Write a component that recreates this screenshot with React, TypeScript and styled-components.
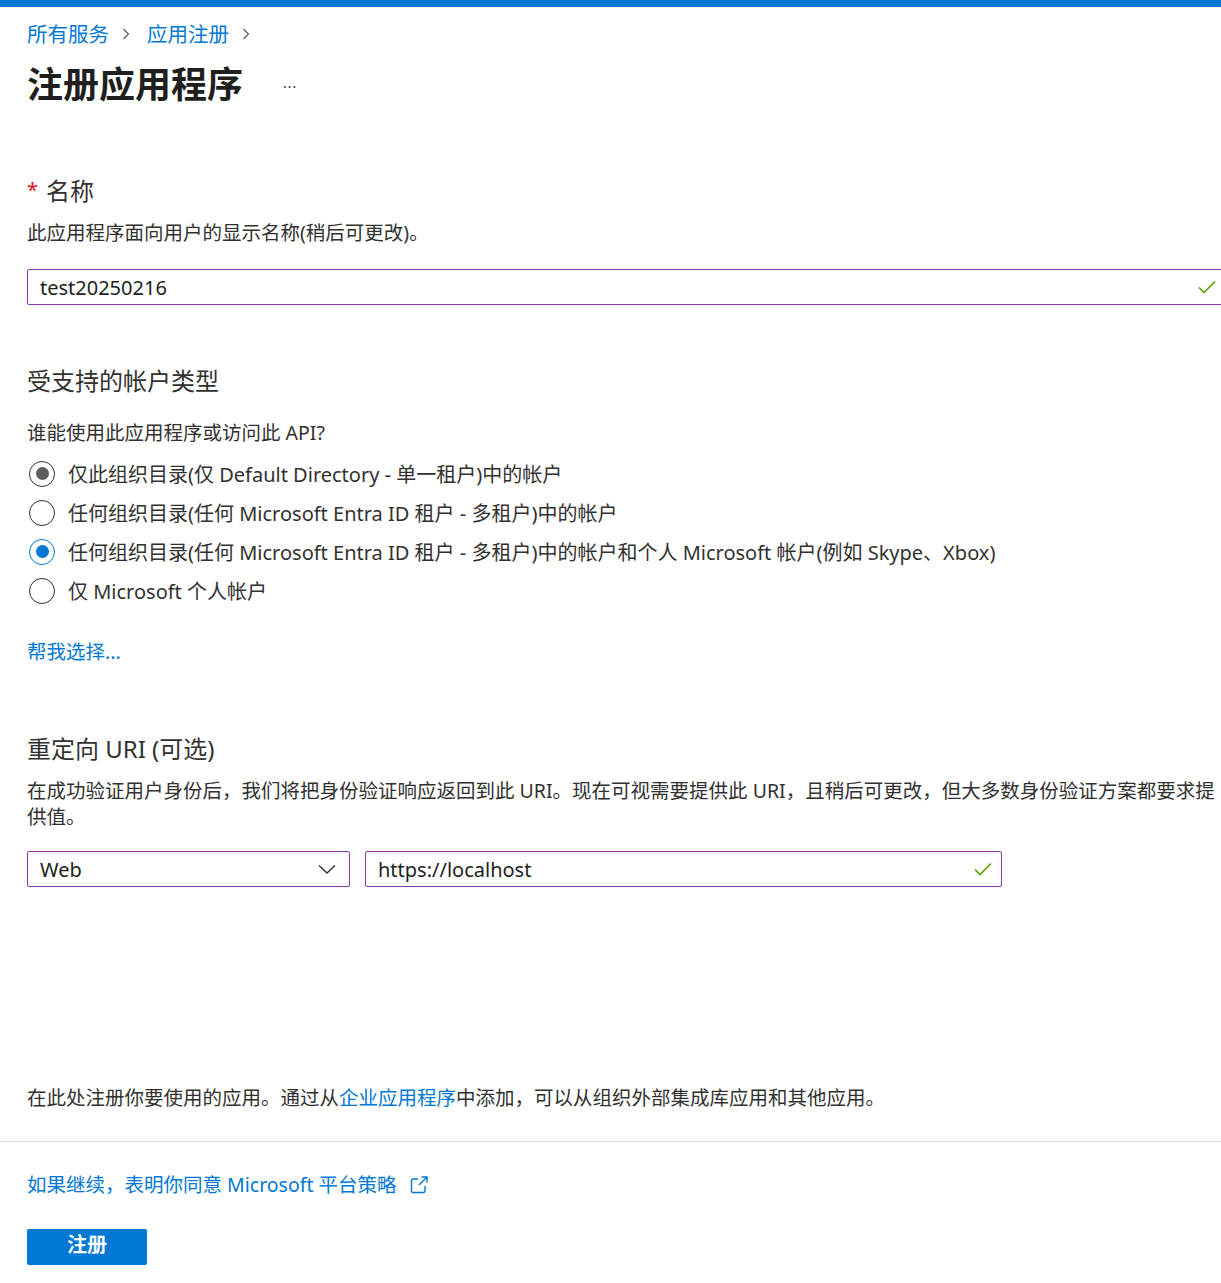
import React from "react";
import styled, { createGlobalStyle } from "styled-components";

const Global = createGlobalStyle`
  html, body { margin: 0; padding: 0; background: #fff; overflow-x: hidden; }
  body {
    font-family: "Noto Sans", "Noto Sans CJK SC", sans-serif;
    color: #323130;
  }
  * { box-sizing: border-box; }
`;

const TopBar = styled.div`
  height: 7px;
  background: #0078d4;
`;

const Page = styled.div`
  padding: 0 0 0 27px;
  width: 1226px;
`;

const Breadcrumb = styled.nav`
  margin-top: 13px;
  height: 28px;
  display: flex;
  align-items: center;
  gap: 11px;
  font-size: 20.5px;
  line-height: 28px;
`;

const Crumb = styled.a`
  color: #0078d4;
  text-decoration: none;
`;

const Chevron = styled.svg`
  width: 12px;
  height: 12px;
  margin-right: 4px;
`;

const TitleRow = styled.div`
  margin-top: 13px;
  display: flex;
  align-items: center;
  gap: 40px;
  height: 48px;
`;

const Title = styled.h1`
  margin: 0;
  font-size: 36px;
  line-height: 48px;
  font-weight: 700;
  color: #201f1e;
`;

const More = styled.span`
  font-size: 14px;
  color: #323130;
  letter-spacing: 1px;
  margin-top: 2px;
`;

const Heading = styled.h2<{ $mt: number }>`
  margin: ${(p) => p.$mt}px 0 0;
  font-size: 24px;
  line-height: 32px;
  font-weight: 400;
  color: #323130;
`;

const Required = styled.span`
  color: #e00b1c;
  font-size: 20px;
  margin-right: 8px;
  position: relative;
  top: -3px;
`;

const Text = styled.p<{ $mt: number }>`
  margin: ${(p) => p.$mt}px 0 0;
  font-size: 19.5px;
  line-height: 26px;
  color: #323130;
`;

const InputBox = styled.div<{ $w: string; $mt?: number; $pr?: number }>`
  margin-top: ${(p) => p.$mt ?? 0}px;
  width: ${(p) => p.$w};
  height: 36px;
  border: 1px solid #8a3ba8;
  border-radius: 2px;
  display: flex;
  align-items: center;
  padding: 0 ${(p) => p.$pr ?? 8}px 0 12px;
  font-size: 20px;
  color: #201f1e;
`;

const InputText = styled.span`
  flex: 1;
`;

const Check = styled.svg`
  width: 20px;
  height: 20px;
`;

const RadioGroup = styled.div`
  margin-top: 8px;
  display: flex;
  flex-direction: column;
`;

const RadioRow = styled.label`
  height: 39px;
  display: flex;
  align-items: center;
  gap: 13px;
  font-size: 20px;
  color: #323130;
  padding-left: 2px;
`;

const RadioCircle = styled.span<{ $state: "off" | "gray" | "blue" }>`
  width: 26px;
  height: 26px;
  border-radius: 50%;
  border: 1.5px solid
    ${(p) => (p.$state === "blue" ? "#0078d4" : "#323130")};
  display: flex;
  align-items: center;
  justify-content: center;
  flex-shrink: 0;
  &::after {
    content: "";
    width: 13px;
    height: 13px;
    border-radius: 50%;
    display: ${(p) => (p.$state === "off" ? "none" : "block")};
    background: ${(p) => (p.$state === "blue" ? "#0078d4" : "#605e5c")};
  }
`;

const Link = styled.a<{ $mt?: number }>`
  display: inline-block;
  margin-top: ${(p) => p.$mt ?? 0}px;
  color: #0078d4;
  text-decoration: none;
  font-size: 19.5px;
  line-height: 26px;
`;

const Wrap = styled.div<{ $mt: number }>`
  margin-top: ${(p) => p.$mt}px;
`;

const UriRow = styled.div`
  margin-top: 21px;
  display: flex;
  gap: 15px;
`;

const Divider = styled.hr`
  margin: 30px 0 0;
  border: none;
  border-top: 1px solid #e1dfdd;
  width: 100%;
`;

const Footer = styled.div`
  padding-left: 27px;
`;

const PolicyLink = styled.a`
  margin-top: 30px;
  display: flex;
  align-items: center;
  gap: 12px;
  color: #0078d4;
  font-size: 19.5px;
  line-height: 26px;
  text-decoration: none;
`;

const PrimaryButton = styled.button`
  margin-top: 31px;
  width: 120px;
  height: 36px;
  border: none;
  border-radius: 2px;
  background: #0078d4;
  color: #fff;
  font-family: inherit;
  font-size: 20px;
  line-height: 20px;
  font-weight: 700;
  padding: 0 0 4px;
`;

const CheckIcon = () => (
  <Check viewBox="0 0 20 20">
    <path d="M2 10.5 L7 15.5 L18 4.5" fill="none" stroke="#57a300" strokeWidth="1.6" />
  </Check>
);

const radios: { label: string; state: "off" | "gray" | "blue" }[] = [
  { label: "仅此组织目录(仅 Default Directory - 单一租户)中的帐户", state: "gray" },
  { label: "任何组织目录(任何 Microsoft Entra ID 租户 - 多租户)中的帐户", state: "off" },
  {
    label: "任何组织目录(任何 Microsoft Entra ID 租户 - 多租户)中的帐户和个人 Microsoft 帐户(例如 Skype、Xbox)",
    state: "blue",
  },
  { label: "仅 Microsoft 个人帐户", state: "off" },
];

const ChevronIcon = () => (
  <Chevron viewBox="0 0 12 12">
    <path d="M3.5 1 L8.5 6 L3.5 11" fill="none" stroke="#605e5c" strokeWidth="1.3" />
  </Chevron>
);

export default function App() {
  return (
    <>
      <Global />
      <TopBar />
      <Page>
        <Breadcrumb>
          <Crumb>所有服务</Crumb>
          <ChevronIcon />
          <Crumb>应用注册</Crumb>
          <ChevronIcon />
        </Breadcrumb>
        <TitleRow>
          <Title>注册应用程序</Title>
          <More>···</More>
        </TitleRow>

        <Heading $mt={66}>
          <Required>*</Required>名称
        </Heading>
        <Text $mt={11}>此应用程序面向用户的显示名称(稍后可更改)。</Text>
        <InputBox $w="1199px" $mt={23}>
          <InputText>test20250216</InputText>
          <CheckIcon />
        </InputBox>

        <Heading $mt={60}>受支持的帐户类型</Heading>
        <Text $mt={23}>谁能使用此应用程序或访问此 API?</Text>
        <RadioGroup>
          {radios.map((r) => (
            <RadioRow key={r.label}>
              <RadioCircle $state={r.state} />
              {r.label}
            </RadioRow>
          ))}
        </RadioGroup>
        <Wrap $mt={29}>
          <Link>帮我选择...</Link>
        </Wrap>

        <Heading $mt={68}>重定向 URI (可选)</Heading>
        <Text $mt={13}>
          在成功验证用户身份后，我们将把身份验证响应返回到此 URI。现在可视需要提供此 URI，且稍后可更改，但大多数身份验证方案都要求提供值。
        </Text>
        <UriRow>
          <InputBox $w="323px" $pr={12}>
            <InputText>Web</InputText>
            <Check viewBox="0 0 20 20">
              <path d="M2 6.5 L10 14 L18 6.5" fill="none" stroke="#323130" strokeWidth="1.4" />
            </Check>
          </InputBox>
          <InputBox $w="637px">
            <InputText>https://localhost</InputText>
            <CheckIcon />
          </InputBox>
        </UriRow>

        <Text $mt={198}>
          在此处注册你要使用的应用。通过从<Link as="span">企业应用程序</Link>中添加，可以从组织外部集成库应用和其他应用。
        </Text>
      </Page>
      <Divider />
      <Footer>
        <PolicyLink>
          如果继续，表明你同意 Microsoft 平台策略
          <svg width="20" height="20" viewBox="0 0 20 20">
            <path
              d="M9 4 H4 a1.5 1.5 0 0 0 -1.5 1.5 V16 a1.5 1.5 0 0 0 1.5 1.5 H14.5 a1.5 1.5 0 0 0 1.5 -1.5 V11 M10 10 L18 2 M12.5 2 H18 V7.5"
              fill="none"
              stroke="#0078d4"
              strokeWidth="1.4"
            />
          </svg>
        </PolicyLink>
        <PrimaryButton>注册</PrimaryButton>
      </Footer>
    </>
  );
}
